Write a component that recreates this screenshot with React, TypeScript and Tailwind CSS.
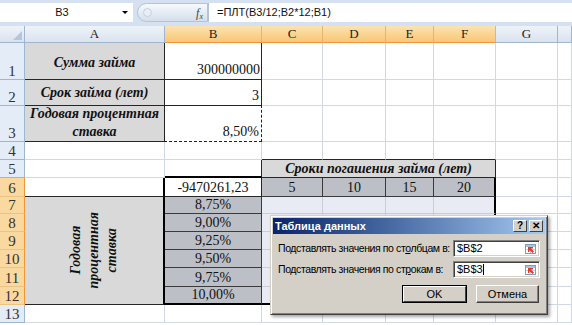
import React from 'react';
import { twMerge } from 'tailwind-merge';

const PLAIN = 'bg-white border-r-[#d0d7e5] border-b-[#d0d7e5]';
const DARK = 'border-r-[#262626] border-b-[#262626]';
const HEAD = 'bg-linear-to-b from-[#eef3f9] to-[#dae3ee] border-r-[#9eb6ce] border-b-[#9eb6ce]';
const HEAD_SEL = 'bg-linear-to-b from-[#fce3b1] to-[#f7c774] border-r-[#e3b56f] border-b-[#f29536]';
const ROW = 'bg-[#e4ecf7] border-r-[#9eb6ce] border-b-[#9eb6ce]';
const ROW_SEL = 'bg-[#f9d99f] border-r-[#f29536] border-b-[#eec37f]';
const TINT = 'bg-[#e8ebf3] border-r-[#c8cdd9] border-b-[#c8cdd9]';
const TINT_GRAY = 'bg-[#bcbfc6] border-r-[#3a3a3a] border-b-[#3a3a3a] justify-center items-end';

function Cell({ className = '', children }: { className?: string; children?: React.ReactNode }) {
    return (
        <div
            className={twMerge(
                'relative flex border-r border-b whitespace-nowrap overflow-hidden text-[14px] leading-[16px] text-[#111]',
                PLAIN,
                className
            )}
        >
            {children}
        </div>
    );
}

function RowHead({ n, sel }: { n: number; sel?: boolean }) {
    return (
        <Cell className={twMerge('items-end justify-center text-[15px] leading-[15px] text-[#333] overflow-visible', sel ? ROW_SEL : ROW)}>
            {n}
        </Cell>
    );
}

function Plain({ count }: { count: number }) {
    return (
        <>
            {Array.from({ length: count }).map((_, i) => (
                <Cell key={i} />
            ))}
        </>
    );
}

function RefIcon() {
    return (
        <svg width="13" height="12" viewBox="0 0 13 12">
            <rect x="1.5" y="1.5" width="10" height="9" fill="#fff" stroke="#7f9db9" />
            <rect x="2" y="2" width="9" height="2" fill="#a9c3e3" />
            <line x1="2" y1="6.5" x2="11" y2="6.5" stroke="#c3d2e6" />
            <line x1="6.5" y1="4" x2="6.5" y2="10" stroke="#c3d2e6" />
            <path d="M4 4 L9 4 L9 5.5 L7 5.5 L10 8.5 L8.5 10 L5.5 7 L5.5 9 L4 9 Z" fill="#e03a2f" />
        </svg>
    );
}

function Field({ value, caret }: { value: string; caret?: boolean }) {
    return (
        <div className="ml-auto shrink-0 w-[87px] h-[17px] bg-white border border-t-[#808080] border-l-[#808080] border-r-white border-b-white shadow-[inset_1px_1px_0_#404040,inset_-1px_-1px_0_#d4d0c8] flex items-center pl-[3px] pr-[2px]">
            <span className="text-black">{value}</span>
            {caret && <span className="w-px h-[11px] bg-black" />}
            <span className="ml-auto flex items-center">
                <RefIcon />
            </span>
        </div>
    );
}

function Dialog() {
    return (
        <div className="absolute left-[270px] top-[215px] w-[278px] h-[100px] bg-[#d4d0c8] border border-t-[#d4d0c8] border-l-[#d4d0c8] border-r-[#404040] border-b-[#404040] shadow-[inset_1px_1px_0_#fff,inset_-1px_-1px_0_#808080,2px_2px_3px_rgba(0,0,0,0.35)] p-[2px] font-['Liberation_Sans',sans-serif] text-[11px] leading-[13px] text-black">
            {/* заголовок */}
            <div className="h-[16px] flex items-center pl-[2px] pr-[2px] bg-linear-to-r from-[#0a246a] to-[#a6caf0]">
                <span className="font-bold text-white">Таблица данных</span>
                <div className="ml-auto flex gap-[2px]">
                    <div className="w-[14px] h-[12px] bg-[#d4d0c8] border border-t-white border-l-white border-r-[#404040] border-b-[#404040] flex items-center justify-center font-bold text-[10px] leading-none">
                        ?
                    </div>
                    <div className="w-[14px] h-[12px] bg-[#d4d0c8] border border-t-white border-l-white border-r-[#404040] border-b-[#404040] flex items-center justify-center font-bold text-[10px] leading-none">
                        ✕
                    </div>
                </div>
            </div>

            <div className="px-[5px] pt-[6px] flex flex-col">
                <div className="flex items-center">
                    <span className="whitespace-nowrap text-[10.5px] tracking-[-0.4px]">
                        Подставлять значения по ст<span className="underline">о</span>лбцам в:
                    </span>
                    <Field value="$B$2" />
                </div>
                <div className="flex items-center mt-[4px]">
                    <span className="whitespace-nowrap text-[10.5px] tracking-[-0.4px]">
                        Подставлять значения по ст<span className="underline">р</span>окам в:
                    </span>
                    <Field value="$B$3" caret />
                </div>
                <div className="flex justify-end gap-[9px] mt-[7px] pr-[1px]">
                    <div className="w-[65px] h-[18px] border border-black">
                        <div className="w-full h-full border border-t-white border-l-white border-r-[#404040] border-b-[#404040] flex items-center justify-center">
                            OK
                        </div>
                    </div>
                    <div className="w-[63px] h-[18px] border border-t-white border-l-white border-r-[#404040] border-b-[#404040] shadow-[inset_-1px_-1px_0_#808080] flex items-center justify-center">
                        Отмена
                    </div>
                </div>
            </div>
        </div>
    );
}

export default function App() {
    return (
        <div className="relative w-[572px] h-[325px] overflow-hidden bg-white font-['Liberation_Serif',serif]">
            {/* СТРОКА ФОРМУЛ */}
            <div className="h-[26px] bg-[#d5e1f0] flex pt-[3px] pb-[4px] font-['Liberation_Sans',sans-serif] text-[11px] text-[#111]">
                <div className="w-[133px] bg-white flex items-center">
                    <span className="flex-1 text-center pl-[2px]">B3</span>
                    <span className="w-0 h-0 border-l-[3px] border-r-[3px] border-t-[3px] border-l-transparent border-r-transparent border-t-black mr-[5px]" />
                </div>
                <div className="w-[4px]" />
                <div className="w-[71px] rounded-l-full bg-linear-to-b from-[#f7f9fc] to-[#d4dfec] border border-[#b3c4da] flex items-center">
                    <span className="ml-[5px] w-[9px] h-[9px] rounded-full border border-[#c5d0dd] bg-[#e9eef5]" />
                    <span className="ml-auto mr-[4px] font-['Liberation_Serif',serif] italic text-[12px] text-[#444]">
                        f<sub className="text-[8px]">x</sub>
                    </span>
                </div>
                <div className="flex-1 bg-white flex items-center pl-[8px] border-l border-[#b3c4da]">
                    =ПЛТ(B3/12;B2*12;B1)
                </div>
            </div>

            {/* ЛИСТ */}
            <div className="grid grid-cols-[25px_140px_97px_61px_63px_48px_62px_62px_14px] grid-rows-[17px_37px_26px_36px_18px_18px_19px_17px_18px_18px_18px_19px_18px_18px]">
                {/* заголовки столбцов */}
                <Cell className={twMerge(HEAD, 'items-end justify-end')}>
                    <svg width="9" height="9" viewBox="0 0 9 9" className="mr-[2px] mb-[2px]">
                        <path d="M9 0 L9 9 L0 9 Z" fill="#b4c6dc" />
                    </svg>
                </Cell>
                <Cell className={twMerge(HEAD, 'items-center justify-center text-[13px] text-[#222]')}>A</Cell>
                {['B', 'C', 'D', 'E', 'F'].map((l) => (
                    <Cell key={l} className={twMerge(HEAD_SEL, 'items-center justify-center text-[13px] text-[#222]')}>
                        {l}
                    </Cell>
                ))}
                <Cell className={twMerge(HEAD, 'items-center justify-center text-[13px] text-[#222]')}>G</Cell>
                <Cell className={HEAD} />

                {/* 1 */}
                <RowHead n={1} />
                <Cell className={twMerge('bg-[#d9d9d9] items-center justify-center font-bold italic pt-[3px]', DARK)}>
                    Сумма займа
                </Cell>
                <Cell className={twMerge('items-end justify-end pr-[1px] pb-[1px]', DARK)}>300000000</Cell>
                <Plain count={6} />

                {/* 2 */}
                <RowHead n={2} />
                <Cell className={twMerge('bg-[#d9d9d9] items-center justify-center font-bold italic', DARK)}>
                    Срок займа (лет)
                </Cell>
                <Cell className={twMerge('items-end justify-end pr-[2px] pb-[1px]', DARK)}>3</Cell>
                <Plain count={6} />

                {/* 3 */}
                <RowHead n={3} />
                <Cell className={twMerge('bg-[#d9d9d9] items-end justify-center text-center font-bold italic leading-[18px] whitespace-normal', DARK)}>
                    Годовая процентная
                    <br />
                    ставка
                </Cell>
                <Cell className="overflow-visible items-end justify-end pr-[2px] pb-[1px] border-r-white border-b-white">
                    8,50%
                    <span className="absolute -left-px -top-px -right-px -bottom-px border border-dashed border-[#222]" />
                </Cell>
                <Plain count={6} />

                {/* 4 */}
                <RowHead n={4} />
                <Plain count={2} />
                <Cell className="border-b-[#262626]" />
                <Cell className="border-b-[#262626]" />
                <Cell className="border-b-[#262626]" />
                <Cell className="border-b-[#262626]" />
                <Plain count={2} />

                {/* 5 */}
                <RowHead n={5} />
                <Cell />
                <Cell className="border-r-[#262626] border-b-2 border-b-black" />
                <Cell className={twMerge('col-span-4 bg-[#d9d9d9] items-end justify-center font-bold italic', DARK)}>
                    Сроки погашения займа (лет)
                </Cell>
                <Plain count={2} />

                {/* 6 */}
                <RowHead n={6} sel />
                <Cell className="border-r-2 border-r-black border-b-[#262626]" />
                <Cell className={twMerge('items-end justify-center', DARK)}>-9470261,23</Cell>
                <Cell className={TINT_GRAY}>5</Cell>
                <Cell className={TINT_GRAY}>10</Cell>
                <Cell className={TINT_GRAY}>15</Cell>
                <Cell className={twMerge(TINT_GRAY, 'border-r-2 border-r-black')}>20</Cell>
                <Plain count={2} />

                {/* 7–12 */}
                {['8,75%', '9,00%', '9,25%', '9,50%', '9,75%', '10,00%'].map((v, i) => {
                    const last = i === 5;
                    return (
                        <React.Fragment key={v}>
                            <RowHead n={7 + i} sel />
                            {i === 0 && (
                                <Cell className="row-span-6 bg-[#d9d9d9] border-r-2 border-r-black border-b-[#262626] items-center justify-center">
                                    <span className="[writing-mode:vertical-rl] rotate-180 text-center font-bold italic leading-[18px] whitespace-normal">
                                        Годовая
                                        <br />
                                        процентная
                                        <br />
                                        ставка
                                    </span>
                                </Cell>
                            )}
                            <Cell className={twMerge(TINT_GRAY, last ? 'border-b-2 border-b-black' : '')}>{v}</Cell>
                            <Cell className={twMerge(TINT, last ? 'border-b-2 border-b-black' : '')} />
                            <Cell className={twMerge(TINT, last ? 'border-b-2 border-b-black' : '')} />
                            <Cell className={twMerge(TINT, last ? 'border-b-2 border-b-black' : '')} />
                            <Cell className={twMerge(TINT, 'border-r-2 border-r-black', last ? 'border-b-2 border-b-black' : '')} />
                            <Plain count={2} />
                        </React.Fragment>
                    );
                })}

                {/* 13 */}
                <RowHead n={13} />
                <Plain count={8} />
            </div>

            <Dialog />
        </div>
    );
}
